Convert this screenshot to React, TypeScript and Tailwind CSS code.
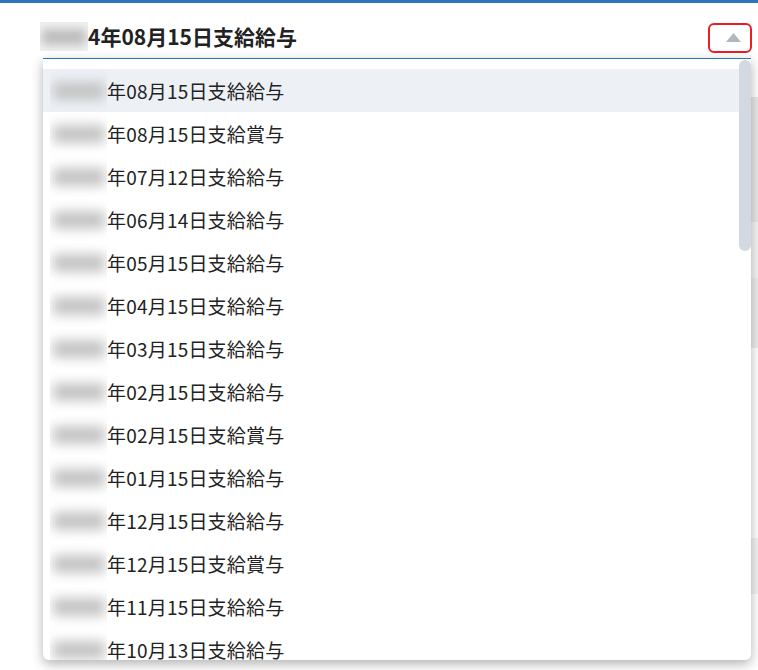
const items = [
  '年08月15日支給給与',
  '年08月15日支給賞与',
  '年07月12日支給給与',
  '年06月14日支給給与',
  '年05月15日支給給与',
  '年04月15日支給給与',
  '年03月15日支給給与',
  '年02月15日支給給与',
  '年02月15日支給賞与',
  '年01月15日支給給与',
  '年12月15日支給給与',
  '年12月15日支給賞与',
  '年11月15日支給給与',
  '年10月13日支給給与',
];

// page content that sits behind the open dropdown (only the right edge shows)
const bgRows = [
  { h: 'h-[44px]', bg: 'bg-white', val: '' },
  { h: 'h-[125px]', bg: 'bg-[#e8e8e8]', val: '' },
  { h: 'h-[56px]', bg: 'bg-[#f4f4f4]', val: '4' },
  { h: 'h-[70px]', bg: 'bg-[#ececec]', val: '' },
  { h: 'h-[60px]', bg: 'bg-white', val: '0' },
  { h: 'h-[130px]', bg: 'bg-white', val: '' },
  { h: 'h-[56px]', bg: 'bg-[#f2f2f2]', val: '0' },
  { h: 'h-[80px]', bg: 'bg-white', val: '' },
];

export default function PayslipSelect() {
  return (
    <div
      className="relative w-[758px] h-[670px] overflow-hidden bg-white text-[#222]"
      style={{ fontFamily: '"Noto Sans CJK JP", "Noto Sans", sans-serif' }}
    >
      <div className="h-[3px] bg-[#2f74b8]" />

      <div className="flex items-center h-[30px] mt-[20px] pl-[40px] pr-[6px]">
        <h2 className="flex items-center text-[21px] font-bold leading-none -mt-[3px]">
          <span className="inline-flex justify-center items-center w-[48px] h-[29px] overflow-hidden bg-[#f2f2f2]">
            <span className="block w-[44px] h-[16px] bg-[#bdbdbd] blur-[5px]" />
          </span>
          <span>4年08月15日支給給与</span>
        </h2>
        <button className="ml-auto flex items-center justify-end w-[44px] h-[30px] pr-[9px] rounded-[6px] border-2 border-[#ee1c25] bg-white">
          <svg width="15" height="10" viewBox="0 0 15 10">
            <path d="M7.5 0L15 9H0Z" fill="#b2b7bd" />
          </svg>
        </button>
      </div>

      <div className="ml-[700px] w-[70px]">
        {bgRows.map((r, i) => (
          <div key={i} className={`${r.h} ${r.bg} flex items-center justify-end text-[18px]`}>
            {r.val}
          </div>
        ))}
      </div>

      <div className="absolute left-[43px] top-[58px] w-[708px] h-[602px] bg-white border-t-[1.5px] border-[#2f74b8] rounded-b-[6px] shadow-[0_4px_12px_rgba(0,0,0,0.3)] overflow-hidden">
        <ul className="pt-[10px]">
          {items.map((label, i) => (
            <li
              key={i}
              className={`flex items-center h-[43px] pl-[7px] pt-[1px] text-[19px] ${i === 0 ? 'bg-[#edf1f6]' : ''}`}
            >
              <span className="flex items-center justify-center w-[57px] h-full overflow-hidden">
                <span className="block w-[52px] h-[18px] bg-[#c4c4c4] blur-[6px]" />
              </span>
              <span className="tracking-[0.2px]">{label}</span>
            </li>
          ))}
        </ul>
        <div className="absolute right-0 top-[1px] w-[12px] h-[191px] rounded-full bg-[#d3d9e0]" />
      </div>
    </div>
  );
}
